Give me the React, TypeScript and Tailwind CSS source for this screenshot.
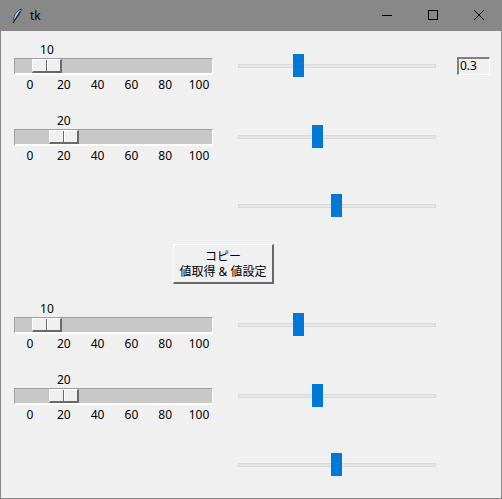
import React from 'react'

const font = { fontFamily: '"Noto Sans", "Noto Sans CJK JP", sans-serif' }

// tk.Scale: trough 199px wide, value 0..100, slider 30px
function TkScale({ value }: { value: number }) {
  const off = 1 + value * 1.69
  const ticks = [0, 20, 40, 60, 80, 100]
  return (
    <div className="flex flex-col pt-[11px] pl-[13px]">
      <div className="relative h-[15px] w-[199px]">
        <span
          className="absolute top-0 -translate-x-1/2 text-[12px] leading-[15px] text-black"
          style={{ left: off + 15 }}
        >
          {value}
        </span>
      </div>
      <div className="relative mt-[1px] h-[17px] w-[199px] bg-[#c8c8c8] border-t border-l border-[#a0a0a0] border-b-2 border-r border-b-white border-r-white">
        <div
          className="absolute top-0 flex h-[14px] w-[30px] border-t border-l border-white border-b-2 border-r-2 border-b-[#696969] border-r-[#696969] bg-[#f0f0f0]"
          style={{ left: off - 1 }}
        >
          <div className="h-full w-[13px]" />
          <div className="h-full w-[1px] bg-[#696969]" />
          <div className="h-full w-[1px] bg-white" />
        </div>
      </div>
      <div className="relative mt-[2px] h-[15px] w-[199px]">
        {ticks.map((t) => (
          <span
            key={t}
            className="absolute top-0 -translate-x-1/2 text-[12px] leading-[15px] text-black"
            style={{ left: 16 + t * 1.69 }}
          >
            {t}
          </span>
        ))}
      </div>
    </div>
  )
}

// ttk.Scale: flat track with blue thumb
function TtkScale({ left }: { left: number }) {
  return (
    <div className="relative h-[23px] w-[198px]">
      <div className="absolute left-0 right-0 top-[10px] h-[4px] border border-[#d9d9d9] bg-[#e7e7e7]" />
      <div className="absolute top-0 h-[23px] w-[11px] bg-[#0078d7]" style={{ left }} />
    </div>
  )
}

function Row({ h, left, ttk, extra }: { h: string; left?: React.ReactNode; ttk: number; extra?: React.ReactNode }) {
  return (
    <div className={`flex ${h}`}>
      <div className="w-[237px] shrink-0">{left}</div>
      <div className="flex items-center pb-[2px]">
        <TtkScale left={ttk} />
        {extra}
      </div>
    </div>
  )
}

function Feather() {
  return (
    <svg width="12" height="16" viewBox="0 0 12 16">
      <path d="M10.5 1 C6 2.5 3 7 2.5 12 L4 12 C6.5 9 9.5 5 10.5 1 Z" fill="#cfe3ff" stroke="#1a3d8a" strokeWidth="1" />
      <path d="M9 3.5 L2 15" stroke="#1a1a1a" strokeWidth="1.2" />
    </svg>
  )
}

export default function App() {
  return (
    <div className="flex h-[499px] w-[502px] flex-col bg-[#888888]" style={font}>
      {/* Title bar */}
      <div className="flex h-[31px] shrink-0 items-center bg-[#888888]">
        <div className="ml-[11px] flex h-[16px] w-[12px] items-center">
          <Feather />
        </div>
        <span className="ml-[7px] text-[12px] leading-[15px] text-black">tk</span>
        <div className="ml-auto flex h-full items-center">
          <svg width="46" height="31" viewBox="0 0 46 31">
            <path d="M18 15.5 H28" stroke="#000" strokeWidth="1" />
          </svg>
          <svg width="46" height="31" viewBox="0 0 46 31">
            <rect x="18.5" y="10.5" width="9" height="9" fill="none" stroke="#000" strokeWidth="1" />
          </svg>
          <svg width="46" height="31" viewBox="0 0 46 31">
            <path d="M18 10 L28 20 M28 10 L18 20" stroke="#000" strokeWidth="1" />
          </svg>
        </div>
      </div>

      {/* Content */}
      <div className="mx-[1px] mb-[1px] flex flex-1 flex-col bg-[#f0f0f0]">
        <Row
          h="h-[71px]"
          left={<TkScale value={10} />}
          ttk={55}
          extra={
            <div className="ml-[21px] flex h-[18px] w-[33px] items-center border-t-2 border-l-2 border-[#808080] border-b border-r border-b-white border-r-white bg-[#f0f0f0] pl-[1px] text-[12px] leading-[14px] text-black">
              0.3
            </div>
          }
        />
        <Row h="h-[71px]" left={<TkScale value={20} />} ttk={74} />
        <Row h="h-[66px]" ttk={93} />

        <div className="flex h-[51px] items-start pt-[5px] pl-[172px]">
          <button className="flex h-[40px] w-[101px] flex-col items-center justify-center border-t border-l border-white border-b-2 border-r-2 border-b-[#696969] border-r-[#696969] bg-[#f0f0f0] text-[12px] text-black">
            <span className="block h-[15px] leading-[15px]">コピー</span>
            <span className="block h-[15px] leading-[15px]">値取得 &amp; 値設定</span>
          </button>
        </div>

        <Row h="h-[71px]" left={<TkScale value={10} />} ttk={55} />
        <Row h="h-[71px]" left={<TkScale value={20} />} ttk={74} />
        <Row h="h-[66px]" ttk={93} />
      </div>
    </div>
  )
}
